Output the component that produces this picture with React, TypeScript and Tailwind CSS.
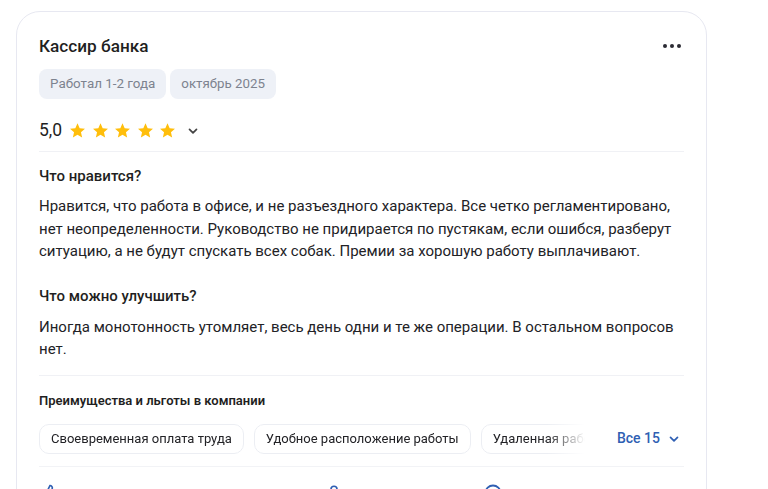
import React from "react";

const Star = () => (
  <svg width="17" height="17" viewBox="0 0 24 24" className="block">
    <path
      d="M12 1.8l3.05 6.9 7.5.72-5.67 5 1.65 7.38L12 17.97l-6.53 3.83 1.65-7.38-5.67-5 7.5-.72z"
      fill="#FFBE0B"
    />
  </svg>
);

const Chevron = ({ color = "#444", size = 12 }: { color?: string; size?: number }) => (
  <svg width={size} height={size} viewBox="0 0 12 12" fill="none">
    <path d="M2.5 4.3L6 7.8l3.5-3.5" stroke={color} strokeWidth="1.7" strokeLinecap="round" strokeLinejoin="round" />
  </svg>
);

export default function App() {
  return (
    <div className="bg-white pt-[11px] pl-[16px] overflow-hidden h-[489px]" style={{ fontFamily: "Roboto, 'Noto Sans', sans-serif" }}>
      <div className="w-[691px] rounded-[24px] border border-[#e7e8f1] pl-[22px] pr-[22px] pt-[22px] pb-10 text-[#1d1d1f]">
        <div className="flex items-center justify-between h-6">
          <div className="text-[17.2px] font-medium leading-6 text-[#1f1f22]">Кассир банка</div>
          <div className="flex gap-[3px] mr-[3px]">
            <span className="w-[4px] h-[4px] rounded-full bg-[#2b2b33]" />
            <span className="w-[4px] h-[4px] rounded-full bg-[#2b2b33]" />
            <span className="w-[4px] h-[4px] rounded-full bg-[#2b2b33]" />
          </div>
        </div>
        <div className="flex gap-[4px] mt-[11px]">
          <span className="h-[30px] px-[11px] rounded-[8px] bg-[#eef1f7] text-[13.4px] text-[#7d838f] flex items-center">Работал 1-2 года</span>
          <span className="h-[30px] px-[11px] rounded-[8px] bg-[#eef1f7] text-[13.3px] text-[#7d838f] flex items-center">октябрь 2025</span>
        </div>
        <div className="flex items-center mt-[19px] h-6">
          <span className="text-[17.5px] leading-6 text-[#1f1f22] mr-[7px]">5,0</span>
          <div className="flex gap-[5.5px]">
            <Star /><Star /><Star /><Star /><Star />
          </div>
          <span className="ml-[11px] mt-[1px]"><Chevron /></span>
        </div>
        <div className="mt-[9px] h-px bg-[#f0f1f5]" />
        <div className="pt-[12px]">
          <div className="text-[15px] font-medium leading-6 text-[#1f1f22]">Что нравится?</div>
          <p className="mt-[7px] text-[15px] leading-[22.5px] text-[#222226]">
            Нравится, что работа в офисе, и не разъездного характера. Все четко регламентировано, нет неопределенности. Руководство не придирается по пустякам, если ошибся, разберут ситуацию, а не будут спускать всех собак. Премии за хорошую работу выплачивают.
          </p>
          <div className="mt-[21px] text-[15px] font-medium leading-6 text-[#1f1f22]">Что можно улучшить?</div>
          <p className="mt-[8px] text-[15px] leading-[22.5px] text-[#222226]">
            Иногда монотонность утомляет, весь день одни и те же операции. В остальном вопросов нет.
          </p>
        </div>
        <div className="mt-[14px] h-px bg-[#f0f1f5]" />
        <div className="pt-[15px]">
          <div className="text-[13px] font-semibold leading-5 text-[#1f1f22]">Преимущества и льготы в компании</div>
          <div className="flex items-center mt-[13px]">
            <div className="w-[546px] overflow-hidden [mask-image:linear-gradient(to_right,black_93%,transparent_100%)]">
              <div className="flex gap-[10px] whitespace-nowrap">
                <span className="h-[30px] px-[11px] rounded-[10px] border border-[#eceef3] text-[13px] text-[#222226] flex items-center shrink-0">Своевременная оплата труда</span>
                <span className="h-[30px] px-[11px] rounded-[10px] border border-[#eceef3] text-[13px] text-[#222226] flex items-center shrink-0">Удобное расположение работы</span>
                <span className="h-[30px] px-[11px] rounded-[10px] border border-[#eceef3] text-[13px] text-[#222226] flex items-center shrink-0">Удаленная работа</span>
              </div>
            </div>
            <div className="ml-auto flex items-center gap-[8px] text-[14px] font-medium text-[#2f5fb3] mr-[4px]">
              <span>Все 15</span>
              <Chevron color="#2f5fb3" />
            </div>
          </div>
        </div>
        <div className="mt-[12px] h-px bg-[#f2f3f6]" />
        <div className="relative h-10 mt-[16px]">
          <svg className="absolute left-[2px] top-[1px]" width="18" height="18" viewBox="0 0 24 24" fill="none" stroke="#2f5fb3" strokeWidth="2.2">
            <path d="M7 10v11M15 5.9L14 10h5.8a2 2 0 0 1 1.9 2.6l-2.3 7A2 2 0 0 1 17.5 21H4a2 2 0 0 1-2-2v-7a2 2 0 0 1 2-2h2.8a2 2 0 0 0 1.8-1.1L12 2a3.1 3.1 0 0 1 3 3.9z" />
          </svg>
          <svg className="absolute left-[286px] top-[1px]" width="18" height="18" viewBox="0 0 24 24" fill="none" stroke="#2f5fb3" strokeWidth="2.2">
            <circle cx="12" cy="7" r="4" />
            <path d="M4 21a8 8 0 0 1 16 0" />
          </svg>
          <svg className="absolute left-[444px] top-[0px]" width="20" height="20" viewBox="0 0 24 24" fill="none" stroke="#2f5fb3" strokeWidth="2.2">
            <circle cx="12" cy="12" r="9" />
          </svg>
        </div>
      </div>
    </div>
  );
}
